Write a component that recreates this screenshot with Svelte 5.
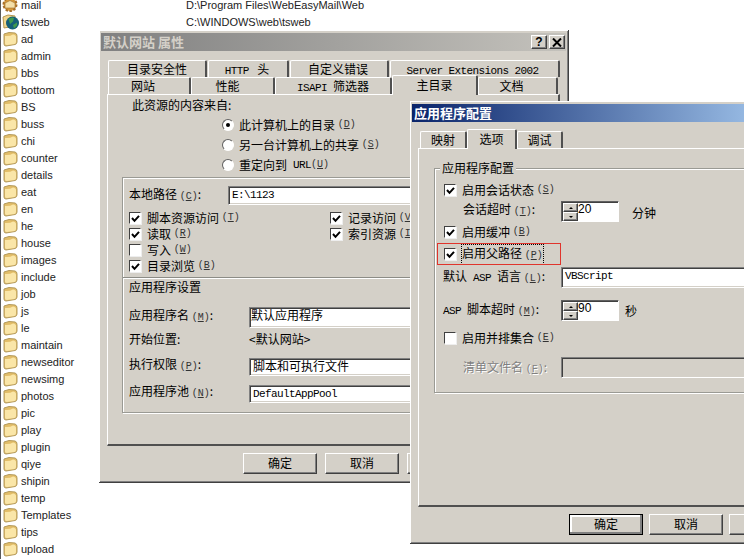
<script>
	const folders = [
		'ad', 'admin', 'bbs', 'bottom', 'BS', 'buss', 'chi', 'counter', 'details', 'eat', 'en', 'he', 'house',
		'images', 'include', 'job', 'js', 'le', 'maintain', 'newseditor', 'newsimg', 'photos', 'pic', 'play',
		'plugin', 'qiye', 'shipin', 'temp', 'Templates', 'tips', 'upload', ''
	];
	const backTabs = [
		{ w: 99, label: '目录安全性', pad: 0 },
		{ w: 81, lat: 'HTTP ', label: ' 头', pad: 2 },
		{ w: 99, label: '自定义错误', pad: 2 },
		{ w: 170, lat: 'Server Extensions 2002', label: '', pad: 4 }
	];
	const frontTabs = [
		{ w: 83, label: '网站', pad: 12 },
		{ w: 84, label: '性能', pad: 10 },
		{ w: 117, lat: 'ISAPI ', label: '筛选器', pad: 0 },
		{ w: 86, label: '主目录', active: true },
		{ w: 80, label: '文档', pad: 12 }
	];
	const optionTabs = [
		{ w: 47, label: '映射', pad: 0 },
		{ w: 50, label: '选项', active: true },
		{ w: 46, label: '调试', pad: 0 }
	];
</script>

{#snippet key(c)}<span class="key">(<u>{c}</u>)</span>{/snippet}

{#snippet tab(t)}
	<div class="tab" class:active={t.active} style="padding-right: {t.pad ?? 0}px">
		<span class="tab-fill" style="width: {t.w - 3 - (t.pad ?? 0)}px">{#if t.lat}<span class="lat">{t.lat}</span>{/if}{t.label}</span>
	</div>
{/snippet}

{#snippet check(on)}
	<span class="check">
		{#if on}
			<svg width="9" height="9" viewBox="0 0 9 9"><polyline points="1,4 3.5,6.8 8,1.8" fill="none" stroke="#000" stroke-width="2" /></svg>
		{/if}
	</span>
{/snippet}

{#snippet spin(value)}
	<div class="spin">
		<div class="spin-btns">
			<span class="raised spin-btn"><i class="up"></i></span>
			<span class="raised spin-btn"><i class="down"></i></span>
		</div>
		<span class="spin-val">{value}</span>
	</div>
{/snippet}

<div class="stage">
	<div class="list">
		<div class="item">
			<svg class="icon" width="16" height="16" viewBox="0 0 16 16">
				<circle cx="8" cy="7.5" r="6.5" fill="#d99a3c" stroke="#a8702a" stroke-width="2" stroke-dasharray="2.5 1.5" />
				<path d="M3 6 L8 3.5 L13 6 L13 11 L3 11 Z" fill="#f4dfa8" stroke="#9a6c2c" stroke-width="0.6" />
			</svg>
			<span class="name">mail</span>
			<span class="path">D:\Program Files\WebEasyMail\Web</span>
		</div>
		<div class="item">
			<svg class="icon" width="17" height="16" viewBox="0 0 17 16">
				<path d="M1 3 L6 1 L13 2 L13 12 L2 14 Z" fill="#f0d58c" stroke="#b59650" />
				<circle cx="10.5" cy="9" r="6.5" fill="#155f78" />
				<path d="M6.5 5 Q10 2.5 12 4 L11 7.5 L8 10 Z M11 11 L15 8.5 L15 11.5 L12 14.5 Z" fill="#3f9a4c" />
			</svg>
			<span class="name second">tsweb</span>
			<span class="path">C:\WINDOWS\web\tsweb</span>
		</div>
		{#each folders as name}
			<div class="item">
				<svg class="icon" width="16" height="16" viewBox="0 0 16 16">
					<path d="M2 3 L7 1.5 L13 2 Q15 2.5 15 5 L15 11 Q15 13 13 13.5 L4 15 Q2 15 2 13 Z" fill="#e2bd68" stroke="#b39a5c" />
					<path d="M3 5 Q8 5.5 11 3.5 Q14 4 14 6 L14 11 Q14 12.5 12.5 13 L5 14 Q3 14 3 12.5 Z" fill="#fae6a8" />
				</svg>
				<span class="name">{name}</span>
			</div>
		{/each}
	</div>

	<div class="window props">
		<div class="title inactive">
			<span>默认网站 属性</span>
			<div class="title-btns">
				<span class="raised title-btn">?</span>
				<span class="raised title-btn">
					<svg width="10" height="9" viewBox="0 0 10 9"><path d="M1 0.5 L9 8.5 M9 0.5 L1 8.5" stroke="#000" stroke-width="2" fill="none" /></svg>
				</span>
			</div>
		</div>
		<div class="tabrow back">
			{#each backTabs as t}{@render tab(t)}{/each}
		</div>
		<div class="tabrow front">
			{#each frontTabs as t}{@render tab(t)}{/each}
		</div>
		<div class="panel props-panel">
			<div class="src-head">此资源的内容来自:</div>
			<div class="radio-row"><span class="radio on"></span>此计算机上的目录 {@render key('D')}</div>
			<div class="radio-row"><span class="radio"></span>另一台计算机上的共享 {@render key('S')}</div>
			<div class="radio-row short"><span class="radio"></span>重定向到<span class="lat">{' URL'}</span>{@render key('U')}</div>

			<div class="group local">
				<div class="field path-field">
					<span class="lbl-a">本地路径 {@render key('C')}:</span>
					<div class="sunken text mono">E:\1123</div>
				</div>
				<div class="checks">
					<div class="chk">{@render check(true)}脚本资源访问 {@render key('T')}</div>
					<div class="chk">{@render check(true)}记录访问 {@render key('V')}</div>
					<div class="chk">{@render check(true)}读取 {@render key('R')}</div>
					<div class="chk">{@render check(true)}索引资源 {@render key('I')}</div>
					<div class="chk">{@render check(false)}写入 {@render key('W')}</div>
					<div></div>
					<div class="chk">{@render check(true)}目录浏览 {@render key('B')}</div>
				</div>
				<div class="rule"></div>
				<div class="subhead">应用程序设置</div>
				<div class="field name-field">
					<span class="lbl-b">应用程序名 {@render key('M')}:</span>
					<div class="sunken text high tight">默认应用程序</div>
				</div>
				<div class="field start-field">
					<span class="lbl-b">开始位置:</span>
					<span class="start-val">&lt;默认网站&gt;</span>
				</div>
				<div class="field perm-field">
					<span class="lbl-b">执行权限 {@render key('P')}:</span>
					<div class="sunken text high">脚本和可执行文件</div>
				</div>
				<div class="field pool-field">
					<span class="lbl-b">应用程序池 {@render key('N')}:</span>
					<div class="sunken text mono">DefaultAppPool</div>
				</div>
			</div>
		</div>
		<div class="btnrow props-btns">
			<span class="raised btn">确定</span>
			<span class="raised btn">取消</span>
			<span class="raised btn"></span>
		</div>
	</div>

	<div class="window config">
		<div class="title">
			<span>应用程序配置</span>
		</div>
		<div class="tabrow options">
			{#each optionTabs as t}{@render tab(t)}{/each}
		</div>
		<div class="panel config-panel">
			<div class="group cfg">
				<span class="legend">应用程序配置</span>
				<div class="chk session">{@render check(true)}启用会话状态 {@render key('S')}</div>
				<div class="field timeout">
					<span class="lbl-c">会话超时 {@render key('T')}:</span>
					{@render spin('20')}
					<span class="unit minutes">分钟</span>
				</div>
				<div class="chk buffer">{@render check(true)}启用缓冲 {@render key('B')}</div>
				<div class="chk parent">
					{@render check(true)}<span class="focus">启用父路径 {@render key('P')}</span>
					<span class="redbox"></span>
				</div>
				<div class="field lang">
					<span class="lbl-d">默认<span class="lat">{' ASP '}</span>语言 {@render key('L')}:</span>
					<div class="sunken text mono">VBScript</div>
				</div>
				<div class="field script">
					<span class="lbl-d"><span class="lat">{'ASP '}</span>脚本超时 {@render key('M')}:</span>
					{@render spin('90')}
					<span class="unit seconds">秒</span>
				</div>
				<div class="chk sxs">{@render check(false)}启用并排集合 {@render key('E')}</div>
				<div class="field manifest">
					<span class="lbl-c disabled">清单文件名 {@render key('F')}:</span>
					<div class="sunken text off"></div>
				</div>
			</div>
		</div>
		<div class="btnrow config-btns">
			<span class="raised btn default">确定</span>
			<span class="raised btn">取消</span>
			<span class="raised btn"></span>
		</div>
	</div>
</div>

<style>
	:global(body) {
		background: #fff;
		font-family: "Noto Sans CJK SC", "Liberation Sans", sans-serif;
	}

	.stage {
		position: relative;
		width: 744px;
		height: 559px;
		overflow: hidden;
		background: #fff;
		font-size: 12px;
		line-height: 16px;
		color: #000;
	}

	/* left explorer pane */
	.list {
		display: flex;
		flex-direction: column;
		margin-top: -4px;
		border-left: 1px solid #5a5a5a;
		width: 400px;
		height: 570px;
		font-family: "Liberation Sans", sans-serif;
		font-size: 11px;
		color: #222;
	}

	.item {
		display: flex;
		align-items: center;
		height: 17px;
		flex-shrink: 0;
		padding-left: 1px;
	}

	.icon {
		flex-shrink: 0;
	}

	.name {
		width: 165px;
		margin-left: 3px;
	}

	.name.second {
		margin-left: 2px;
	}

	.path {
		white-space: nowrap;
	}

	/* windows */
	.window {
		position: absolute;
		box-sizing: border-box;
		display: flex;
		flex-direction: column;
		padding: 3px 2px 2px;
		background: #d4d0c8;
		border-right: 1px solid #404040;
		border-bottom: 1px solid #404040;
		box-shadow: inset 1px 1px #fff, inset -1px -1px #808080;
	}

	.props {
		left: 99px;
		top: 30px;
		width: 470px;
		height: 453px;
	}

	.config {
		left: 410px;
		top: 101px;
		width: 380px;
		height: 443px;
	}

	.title {
		display: flex;
		align-items: center;
		justify-content: space-between;
		flex-shrink: 0;
		height: 18px;
		padding-left: 2px;
		color: #fff;
		font-weight: 700;
		font-size: 13px;
		background: linear-gradient(90deg, #0a246a, #a6caf0);
	}

	.title.inactive {
		color: #d4d0c8;
		background: linear-gradient(90deg, #808080, #c4c2bc);
	}

	.title-btns {
		display: flex;
		gap: 2px;
		margin-right: 1px;
	}

	.title-btn {
		display: flex;
		align-items: center;
		justify-content: center;
		width: 16px;
		height: 14px;
		font-family: "Liberation Sans", sans-serif;
		font-size: 12px;
		font-weight: 700;
		color: #000;
	}

	.raised {
		box-sizing: border-box;
		background: #d4d0c8;
		border: 1px solid;
		border-color: #fff #404040 #404040 #fff;
		box-shadow: inset -1px -1px #808080;
	}

	.sunken {
		box-sizing: border-box;
		background: #fff;
		border: 1px solid;
		border-color: #808080 #fff #fff #808080;
		box-shadow: inset 1px 1px #404040, inset -1px -1px #d4d0c8;
	}

	/* tabs */
	.tabrow {
		display: flex;
		flex-shrink: 0;
		align-items: flex-end;
		position: relative;
	}

	.tabrow.back {
		margin: 9px 0 0 7px;
		height: 17px;
		gap: 1px;
	}

	.tabrow.front {
		margin-left: 7px;
		height: 17px;
	}

	.tabrow.options {
		margin: 7px 0 0 8px;
		height: 19px;
		z-index: 1;
	}

	.tab {
		box-sizing: content-box;
		flex-shrink: 0;
		height: 16px;
		line-height: 16px;
		white-space: pre;
		background: #d4d0c8;
		border-top: 1px solid #fff;
		border-left: 1px solid #fff;
		border-right: 2px solid #505050;
		border-radius: 2px 2px 0 0;
	}

	.tab-fill {
		display: block;
		text-align: center;
	}

	.tab.active {
		height: 19px;
		margin-bottom: -1px;
		position: relative;
		z-index: 2;
	}

	.front .tab.active .tab-fill {
		margin-top: 1px;
	}

	.options .tab.active .tab-fill {
		margin-top: 1px;
	}

	.panel {
		box-sizing: border-box;
		flex-shrink: 0;
		background: #d4d0c8;
		border-top: 1px solid #fff;
		border-left: 1px solid #fff;
		border-bottom: 2px solid #505050;
		border-right: 2px solid #505050;
	}

	.props-panel {
		margin-left: 6px;
		width: 453px;
		height: 352px;
	}

	.config-panel {
		margin-left: 6px;
		width: 360px;
		height: 359px;
	}

	.src-head {
		height: 20px;
		line-height: 20px;
		padding-left: 24px;
	}

	.radio-row {
		display: flex;
		align-items: center;
		white-space: pre;
		height: 20px;
		padding-left: 114px;
	}

	.radio-row.short {
		height: 19px;
	}

	.radio {
		box-sizing: border-box;
		width: 12px;
		height: 12px;
		margin-right: 5px;
		border-radius: 50%;
		background: #fff;
		border: 1px solid;
		border-color: #606060 #fff #fff #606060;
		display: flex;
		align-items: center;
		justify-content: center;
	}

	.radio.on::after {
		content: "";
		width: 4px;
		height: 4px;
		border-radius: 50%;
		background: #000;
	}

	/* group boxes */
	.group {
		position: relative;
		box-sizing: border-box;
		border: 1px solid #9a9a94;
		box-shadow: inset 1px 1px #fff, 1px 1px #fff;
	}

	.local {
		margin: 3px 0 0 14px;
		width: 430px;
		height: 236px;
		padding-left: 6px;
	}

	.field {
		display: flex;
		align-items: center;
		white-space: pre;
	}

	.lbl-a {
		width: 99px;
		flex-shrink: 0;
	}

	.lbl-b {
		width: 120px;
		flex-shrink: 0;
		padding-bottom: 3px;
	}

	.path-field {
		margin-top: 8px;
		height: 19px;
	}

	.name-field {
		margin-top: 11px;
		height: 21px;
	}

	.start-field {
		margin-top: 4px;
		height: 16px;
	}

	.start-val {
		padding-bottom: 3px;
	}

	.perm-field {
		margin-top: 10px;
		height: 18px;
	}

	.pool-field {
		margin-top: 9px;
		height: 18px;
	}

	.text {
		flex: 1;
		height: 100%;
		padding: 1px 3px;
		line-height: 15px;
		white-space: pre;
	}

	.text.high {
		padding-top: 0;
		line-height: 13px;
	}

	.text.tight {
		padding-left: 1px;
	}

	.mono,
	.lat {
		font-family: "Liberation Mono", monospace;
		font-size: 11px;
		letter-spacing: -0.6px;
	}

	.key {
		font-family: "Liberation Mono", monospace;
		font-size: 10px;
		color: #333;
	}

	.checks {
		display: grid;
		grid-template-columns: 201px 1fr;
		grid-auto-rows: 16px;
		margin-top: 5px;
	}

	.chk {
		display: flex;
		align-items: center;
		white-space: pre;
		position: relative;
	}

	.check {
		box-sizing: border-box;
		flex-shrink: 0;
		width: 12px;
		height: 12px;
		margin-right: 6px;
		display: flex;
		align-items: center;
		justify-content: center;
		background: #fff;
		border: 1px solid;
		border-color: #404040 #fff #fff #404040;
		box-shadow: 1px 1px #eee;
	}

	.rule {
		margin: 3px 0 0 -6px;
		height: 1px;
		background: #8c8c86;
		border-bottom: 1px solid #fff;
	}

	.subhead {
		margin-top: 0;
		height: 17px;
	}

	.btnrow {
		display: flex;
		flex-shrink: 0;
		margin-top: 7px;
	}

	.btn {
		flex-shrink: 0;
		width: 74px;
		height: 21px;
		line-height: 18px;
		text-align: center;
	}

	.props-btns {
		margin-left: 142px;
		gap: 8px;
	}

	.config-btns {
		margin-left: 157px;
		gap: 6px;
	}

	.btn.default {
		outline: 1px solid #000;
		outline-offset: -1px;
		box-shadow: inset -2px -2px #808080, inset 2px 2px #fff;
		border: 1px solid #000;
	}

	/* config window */
	.cfg {
		margin: 19px 0 0 15px;
		width: 350px;
		height: 225px;
		padding-left: 9px;
	}

	.legend {
		position: absolute;
		left: 5px;
		top: -9px;
		padding: 0 2px;
		background: #d4d0c8;
	}

	.session {
		margin-top: 13px;
		height: 16px;
	}

	.timeout {
		margin-top: 3px;
		height: 21px;
	}

	.lbl-c {
		width: 98px;
		flex-shrink: 0;
		margin-left: 19px;
		padding-bottom: 2px;
	}

	.lbl-d {
		width: 118px;
		flex-shrink: 0;
		margin-left: -1px;
	}

	.disabled {
		color: #808080;
		text-shadow: 1px 1px #fff;
		padding: 2px 0 0;
	}

	.disabled .key {
		color: #808080;
	}

	.buffer {
		margin-top: 2px;
		height: 16px;
	}

	.parent {
		margin-top: 6px;
		height: 16px;
	}

	.focus {
		outline: 1px dotted #000;
		outline-offset: 0;
	}

	.redbox {
		position: absolute;
		left: -7px;
		top: -3px;
		width: 124px;
		height: 22px;
		box-sizing: border-box;
		border: 1px solid #e0342c;
	}

	.lang {
		margin-top: 5px;
		height: 21px;
	}

	.script {
		margin-top: 12px;
		height: 21px;
	}

	.sxs {
		margin-top: 9px;
		height: 16px;
	}

	.manifest {
		margin-top: 11px;
		height: 21px;
	}

	.off {
		background: #d4d0c8;
	}

	.spin {
		box-sizing: border-box;
		display: flex;
		width: 58px;
		height: 21px;
		background: #fff;
		border: 1px solid;
		border-color: #606060 #fff #fff #606060;
		box-shadow: inset 1px 1px #404040;
	}

	.spin-btns {
		display: flex;
		flex-direction: column;
		margin: 1px 0 0 1px;
	}

	.spin-btn {
		display: flex;
		align-items: center;
		justify-content: center;
		width: 15px;
		height: 9.5px;
	}

	.spin-btn i {
		width: 0;
		height: 0;
		border-left: 2px solid transparent;
		border-right: 2px solid transparent;
	}

	.up {
		border-bottom: 2px solid #000;
	}

	.down {
		border-top: 2px solid #000;
	}

	.spin-val {
		font-family: "Liberation Sans", sans-serif;
		line-height: 15px;
	}

	.minutes {
		margin-left: 13px;
		margin-top: 2px;
	}

	.seconds {
		margin-left: 6px;
	}
</style>
